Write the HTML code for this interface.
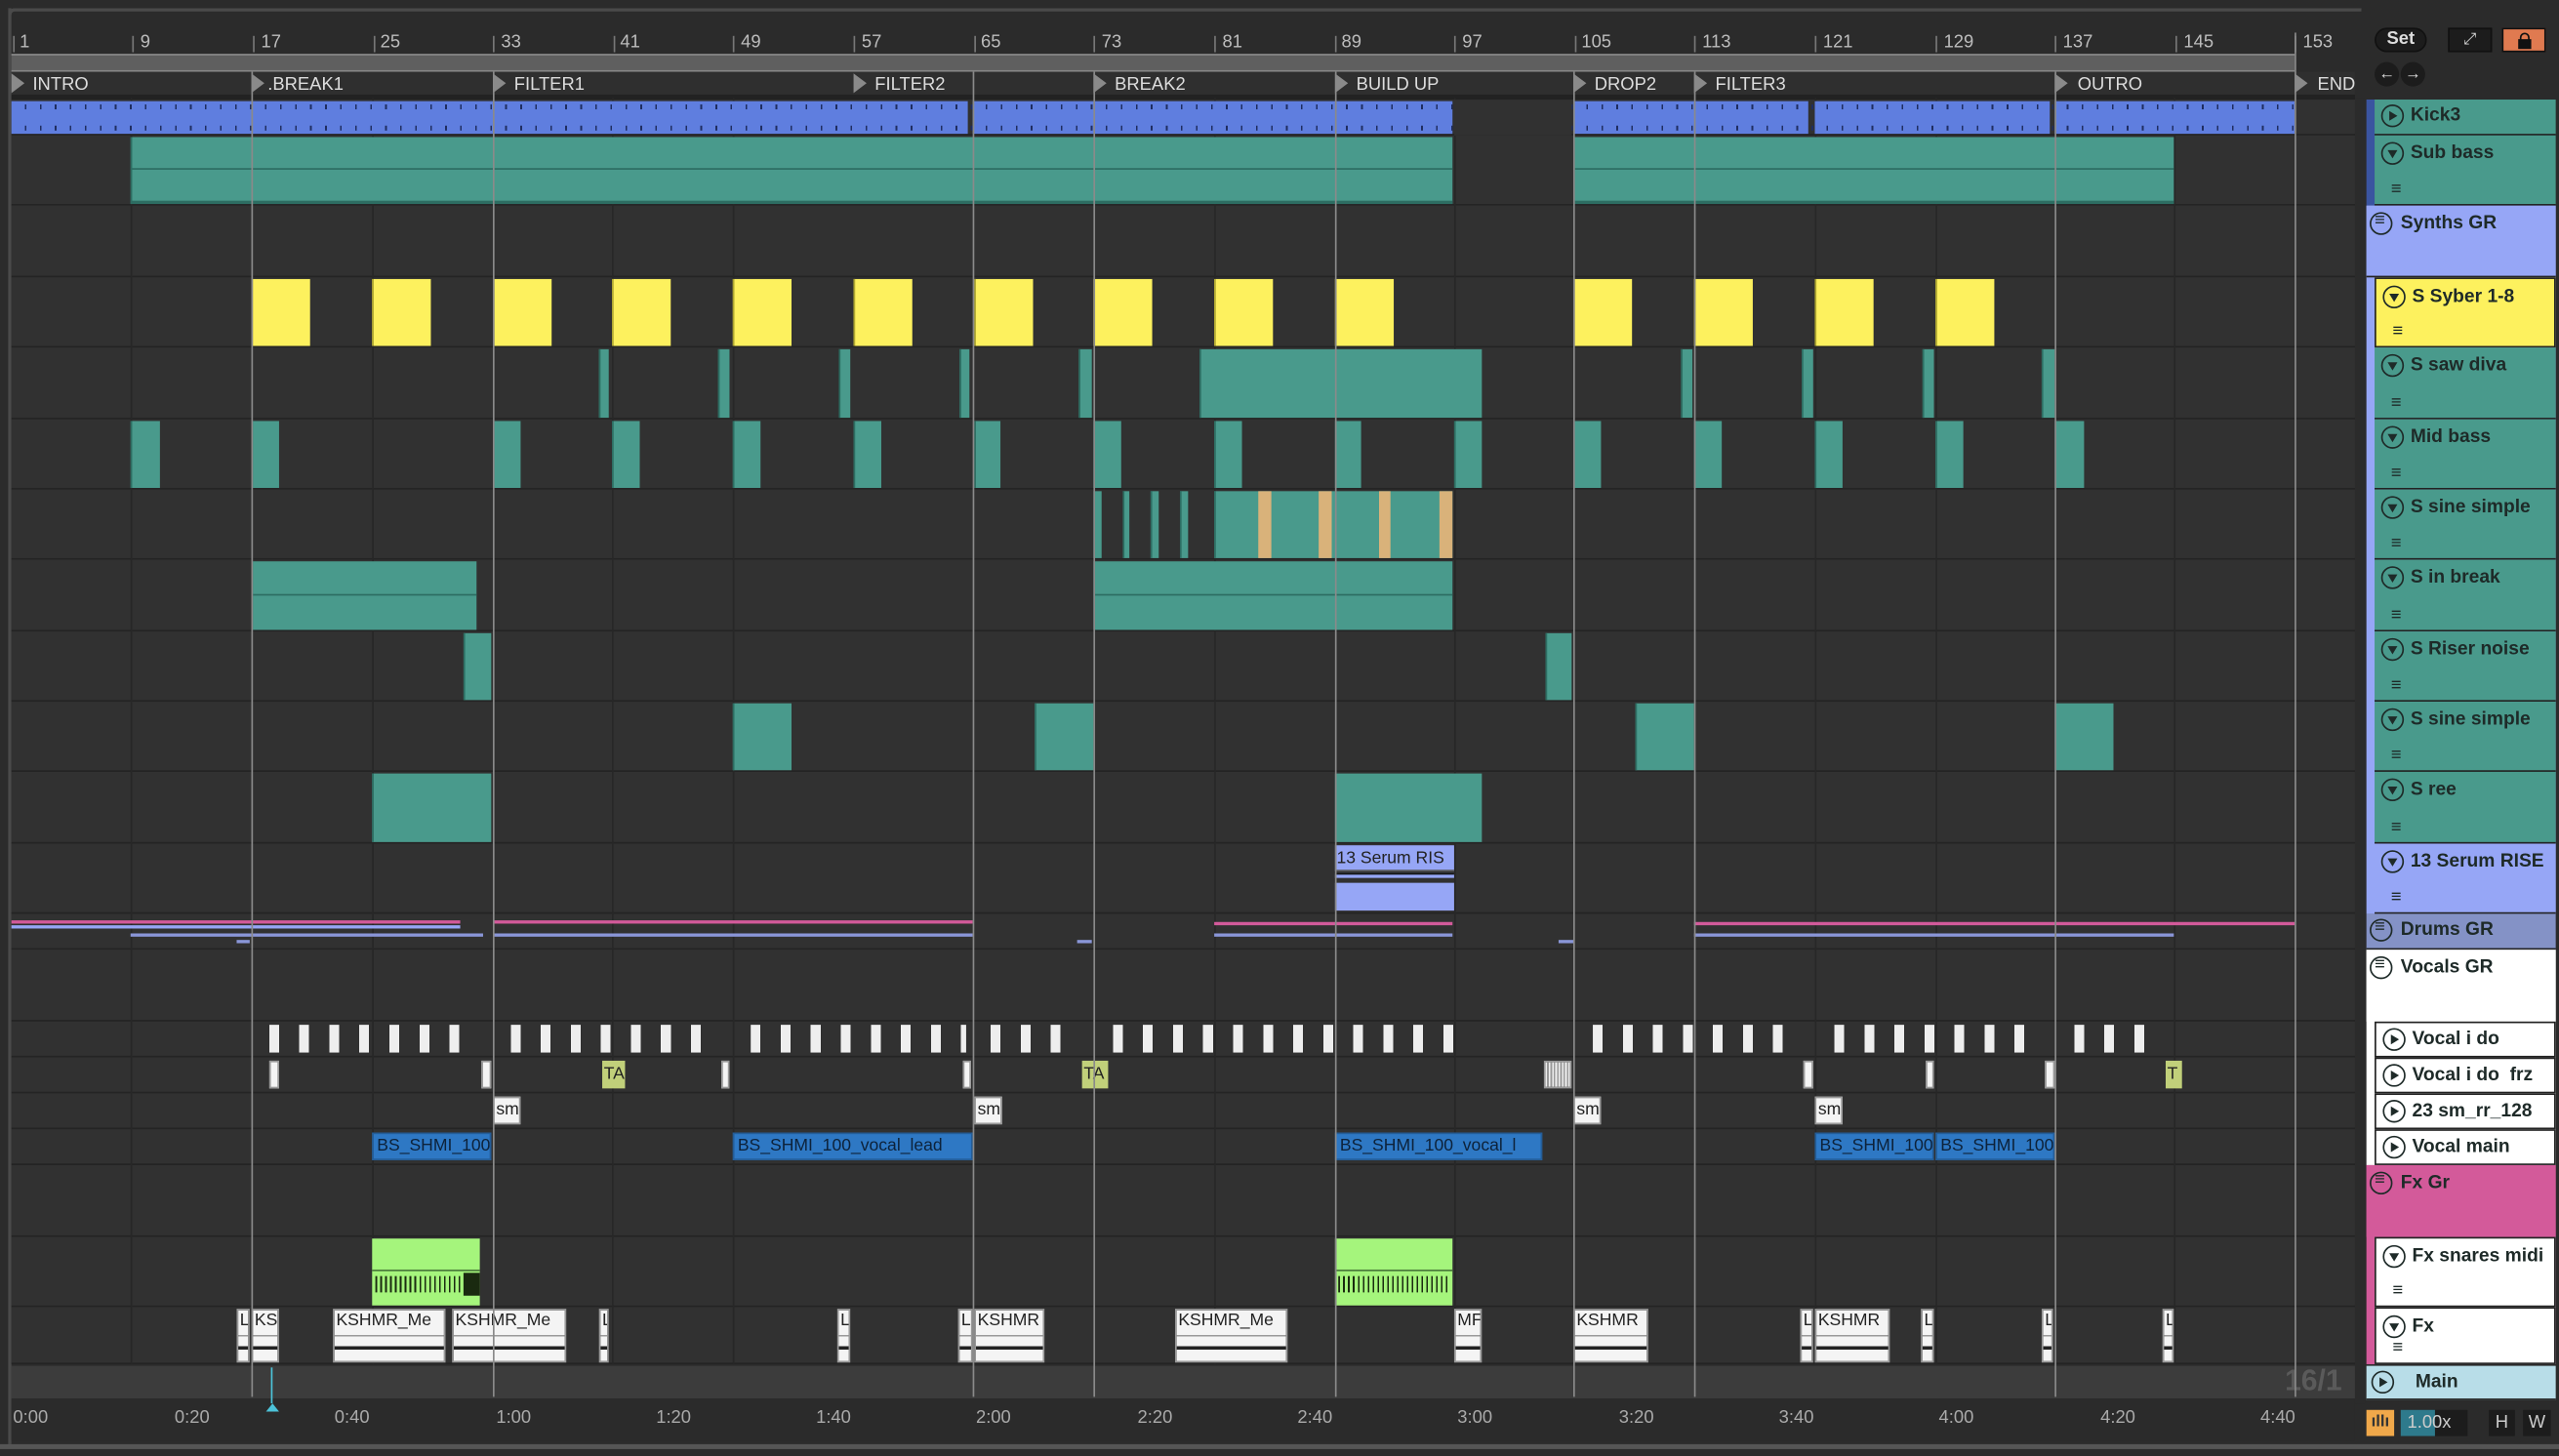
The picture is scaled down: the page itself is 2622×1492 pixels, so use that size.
<!DOCTYPE html>
<html><head><meta charset="utf-8"><style>
*{margin:0;padding:0;box-sizing:border-box}
html,body{width:2622px;height:1492px;overflow:hidden;background:#2a2a2a}
#w{position:absolute;left:0;top:0;width:1568px;height:892px;transform:scale(1.67219);transform-origin:0 0;font-family:"Liberation Sans",sans-serif;background:#2b2b2b}
.a{position:absolute}
.r{position:absolute;left:7px;width:1436px;background:#313131;border-bottom:1px solid #242424}
.c{position:absolute;top:1px;bottom:1px}
.t{background:#499a8c;border-left:1px solid #2d6d62}
.b{background:#5f7edf}
.y{background:#fdf15e;border-left:1px solid #b0a830}
.g{background:#a5f57c}
.w{background:#f4f4f4;border:1px solid #999}
.v{background:#2e78c4;color:#0d223a;font-size:10.5px;line-height:15px;padding-left:2px;overflow:hidden;white-space:nowrap;border:1px solid #245d98}
.lbl{font-size:10.5px;color:#222;overflow:hidden;white-space:nowrap;padding-left:1px;line-height:13px}
.fx{background:linear-gradient(#f4f4f4 0 15px,#999 15px 16px,#f4f4f4 16px 22px,#222 22px 24px,#f4f4f4 24px)}
.vl{position:absolute;top:44px;height:812px;width:1px;background:#8a8a8a}
.dl{position:absolute;top:60px;height:776px;width:1px;background:#272727}
.num{position:absolute;top:20px;font-size:11px;color:#bdbdbd}
.tick{position:absolute;top:22px;width:1px;height:10px;background:#777}
.loc{position:absolute;top:45px;font-size:11px;color:#ddd;line-height:14px}
.tri{position:absolute;top:45px;width:0;height:0;border-top:6px solid transparent;border-bottom:6px solid transparent;border-left:8px solid #8a8a8a}
.h{position:absolute;left:1455px;width:111px;border-bottom:1px solid #222;font-size:11.5px;font-weight:bold;color:#1e2a28;padding:4px 0 0 22px;line-height:14px}
.h .ic{position:absolute;left:4px;top:4px;width:14px;height:14px;border:1.3px solid #1e2a28;border-radius:50%}
.pl:after{content:"";position:absolute;left:4px;top:2.5px;border-top:3.5px solid transparent;border-bottom:3.5px solid transparent;border-left:5px solid #1e2a28}
.dn:after{content:"";position:absolute;left:2.5px;top:4px;border-left:3.5px solid transparent;border-right:3.5px solid transparent;border-top:5px solid #1e2a28}
.gr:after{content:"≡";position:absolute;left:2px;top:-3px;font-size:11px}
.h .m{position:absolute;left:10px;font-size:11px;bottom:2px}
.tm{position:absolute;top:863px;font-size:11px;color:#aaa}
</style></head><body><div id="w">
<div class="a" style="left:5px;top:5px;width:1442px;height:4px;border-top:2px solid #4a4a4a;border-left:2px solid #4a4a4a;border-radius:4px 0 0 0"></div>
<div class="a" style="left:5px;top:5px;width:2px;height:880px;background:#4a4a4a"></div>
<div class="num" style="left:12px">1</div><div class="num" style="left:86px">9</div><div class="num" style="left:160px">17</div><div class="num" style="left:233px">25</div><div class="num" style="left:307px">33</div><div class="num" style="left:380px">41</div><div class="num" style="left:454px">49</div><div class="num" style="left:528px">57</div><div class="num" style="left:601px">65</div><div class="num" style="left:675px">73</div><div class="num" style="left:749px">81</div><div class="num" style="left:822px">89</div><div class="num" style="left:896px">97</div><div class="num" style="left:969px">105</div><div class="num" style="left:1043px">113</div><div class="num" style="left:1117px">121</div><div class="num" style="left:1191px">129</div><div class="num" style="left:1264px">137</div><div class="num" style="left:1338px">145</div><div class="num" style="left:1411px">153</div>
<div class="tick" style="left:8px"></div><div class="tick" style="left:81px"></div><div class="tick" style="left:155px"></div><div class="tick" style="left:229px"></div><div class="tick" style="left:302px"></div><div class="tick" style="left:376px"></div><div class="tick" style="left:449px"></div><div class="tick" style="left:523px"></div><div class="tick" style="left:597px"></div><div class="tick" style="left:670px"></div><div class="tick" style="left:744px"></div><div class="tick" style="left:818px"></div><div class="tick" style="left:891px"></div><div class="tick" style="left:965px"></div><div class="tick" style="left:1038px"></div><div class="tick" style="left:1112px"></div><div class="tick" style="left:1186px"></div><div class="tick" style="left:1259px"></div><div class="tick" style="left:1333px"></div><div class="tick" style="left:1406px"></div>
<div class="a" style="left:7px;top:33px;width:1399px;height:11px;background:#5f5f5f;border-top:1px solid #888;border-bottom:1px solid #888"></div>
<div class="a" style="left:7px;top:44px;width:1436px;height:14px;background:#2f2f2f"></div>
<div class="a" style="left:7px;top:58px;width:1436px;height:3px;background:#222"></div>
<div class="tri" style="left:7px"></div><div class="loc" style="left:20px">INTRO</div>
<div class="tri" style="left:154px"></div><div class="loc" style="left:164px">.BREAK1</div>
<div class="tri" style="left:302px"></div><div class="loc" style="left:315px">FILTER1</div>
<div class="tri" style="left:523px"></div><div class="loc" style="left:536px">FILTER2</div>
<div class="tri" style="left:670px"></div><div class="loc" style="left:683px">BREAK2</div>
<div class="tri" style="left:818px"></div><div class="loc" style="left:831px">BUILD UP</div>
<div class="tri" style="left:964px"></div><div class="loc" style="left:977px">DROP2</div>
<div class="tri" style="left:1038px"></div><div class="loc" style="left:1051px">FILTER3</div>
<div class="tri" style="left:1259px"></div><div class="loc" style="left:1273px">OUTRO</div>
<div class="tri" style="left:1406px"></div><div class="loc" style="left:1420px">END</div>

<div class="r" style="top:61px;height:22px"></div>
<div class="r" style="top:83px;height:43px"></div>
<div class="r" style="top:126px;height:44px"></div>
<div class="r" style="top:170px;height:43px"></div>
<div class="r" style="top:213px;height:44px"></div>
<div class="r" style="top:257px;height:43px"></div>
<div class="r" style="top:300px;height:43px"></div>
<div class="r" style="top:343px;height:44px"></div>
<div class="r" style="top:387px;height:43px"></div>
<div class="r" style="top:430px;height:43px"></div>
<div class="r" style="top:473px;height:44px"></div>
<div class="r" style="top:517px;height:43px"></div>
<div class="r" style="top:560px;height:22px"></div>
<div class="r" style="top:582px;height:44px"></div>
<div class="r" style="top:626px;height:22px"></div>
<div class="r" style="top:648px;height:22px"></div>
<div class="r" style="top:670px;height:22px"></div>
<div class="r" style="top:692px;height:22px"></div>
<div class="r" style="top:714px;height:44px"></div>
<div class="r" style="top:758px;height:43px"></div>
<div class="r" style="top:801px;height:35px"></div>
<div class="a" style="left:7px;top:837px;width:1436px;height:20px;background:#3c3c3c"></div>
<div class="a" style="left:1400px;top:836px;font-size:18px;font-weight:bold;color:#5a5a5a">16/1</div>

<div class="dl" style="left:80px"></div><div class="dl" style="left:228px"></div><div class="dl" style="left:375px"></div><div class="dl" style="left:449px"></div><div class="dl" style="left:744px"></div><div class="dl" style="left:891px"></div><div class="dl" style="left:1112px"></div><div class="dl" style="left:1186px"></div><div class="dl" style="left:1332px"></div>

<div class="a" style="left:0;top:61px;width:1568px;height:22px">
<div class="c b" style="left:7px;width:586px"></div><div class="c b" style="left:596px;width:294px"></div><div class="c b" style="left:964px;width:144px"></div><div class="c b" style="left:1112px;width:144px"></div><div class="c b" style="left:1259px;width:147px"></div>
<div class="a" style="left:7px;top:3px;width:1399px;height:3px;background:repeating-linear-gradient(90deg,transparent 0 8.2px,#1f2d60 8.2px 9.2px)"></div>
<div class="a" style="left:7px;top:16px;width:1399px;height:3px;background:repeating-linear-gradient(90deg,transparent 0 8.2px,#1f2d60 8.2px 9.2px)"></div>
<div class="a" style="left:891px;top:0;width:72px;height:22px;background:#313131"></div>
</div>
<div class="a" style="left:0;top:83px;width:1568px;height:43px">
<div class="c t" style="left:80px;width:810px;border-bottom:2px solid #2d6d62"></div><div class="c t" style="left:964px;width:368px;border-bottom:2px solid #2d6d62"></div>
<div class="a" style="left:80px;top:20px;width:810px;height:1px;background:#2d6d62"></div><div class="a" style="left:964px;top:20px;width:368px;height:1px;background:#2d6d62"></div>
</div>
<div class="a" style="left:0;top:170px;width:1568px;height:43px">
<div class="c y" style="left:154px;width:36px"></div><div class="c y" style="left:228px;width:36px"></div><div class="c y" style="left:302px;width:36px"></div><div class="c y" style="left:375px;width:36px"></div><div class="c y" style="left:449px;width:36px"></div><div class="c y" style="left:523px;width:36px"></div><div class="c y" style="left:597px;width:36px"></div><div class="c y" style="left:670px;width:36px"></div><div class="c y" style="left:744px;width:36px"></div><div class="c y" style="left:818px;width:36px"></div><div class="c y" style="left:964px;width:36px"></div><div class="c y" style="left:1038px;width:36px"></div><div class="c y" style="left:1112px;width:36px"></div><div class="c y" style="left:1186px;width:36px"></div>
</div>
<div class="a" style="left:0;top:213px;width:1568px;height:44px">
<div class="c t" style="left:367px;width:6px"></div><div class="c t" style="left:440px;width:7px"></div><div class="c t" style="left:514px;width:7px"></div><div class="c t" style="left:588px;width:6px"></div><div class="c t" style="left:661px;width:8px"></div><div class="c t" style="left:735px;width:173px"></div><div class="c t" style="left:1030px;width:7px"></div><div class="c t" style="left:1104px;width:7px"></div><div class="c t" style="left:1178px;width:7px"></div><div class="c t" style="left:1251px;width:8px"></div>
</div>
<div class="a" style="left:0;top:257px;width:1568px;height:43px">
<div class="c t" style="left:80px;width:18px"></div><div class="c t" style="left:154px;width:17px"></div><div class="c t" style="left:302px;width:17px"></div><div class="c t" style="left:375px;width:17px"></div><div class="c t" style="left:449px;width:17px"></div><div class="c t" style="left:523px;width:17px"></div><div class="c t" style="left:597px;width:16px"></div><div class="c t" style="left:670px;width:17px"></div><div class="c t" style="left:744px;width:17px"></div><div class="c t" style="left:818px;width:16px"></div><div class="c t" style="left:891px;width:17px"></div><div class="c t" style="left:964px;width:17px"></div><div class="c t" style="left:1038px;width:17px"></div><div class="c t" style="left:1112px;width:17px"></div><div class="c t" style="left:1186px;width:17px"></div><div class="c t" style="left:1259px;width:18px"></div>
</div>
<div class="a" style="left:0;top:300px;width:1568px;height:43px">
<div class="c t" style="left:670px;width:5px"></div><div class="c t" style="left:688px;width:4px"></div><div class="c t" style="left:705px;width:5px"></div><div class="c t" style="left:723px;width:5px"></div><div class="c t" style="left:744px;width:146px"></div>
<div class="c" style="left:771px;width:8px;background:#d9b27a"></div><div class="c" style="left:808px;width:8px;background:#d9b27a"></div><div class="c" style="left:845px;width:7px;background:#d9b27a"></div><div class="c" style="left:882px;width:8px;background:#d9b27a"></div>
</div>
<div class="a" style="left:0;top:343px;width:1568px;height:44px">
<div class="c t" style="left:154px;width:138px"></div><div class="c t" style="left:670px;width:220px"></div>
<div class="a" style="left:154px;top:21px;width:138px;height:1px;background:#2d6d62"></div><div class="a" style="left:670px;top:21px;width:220px;height:1px;background:#2d6d62"></div>
</div>
<div class="a" style="left:0;top:387px;width:1568px;height:43px">
<div class="c t" style="left:284px;width:17px"></div><div class="c t" style="left:947px;width:16px"></div>
</div>
<div class="a" style="left:0;top:430px;width:1568px;height:43px">
<div class="c t" style="left:449px;width:36px"></div><div class="c t" style="left:634px;width:36px"></div><div class="c t" style="left:1002px;width:36px"></div><div class="c t" style="left:1259px;width:36px"></div>
</div>
<div class="a" style="left:0;top:473px;width:1568px;height:44px">
<div class="c t" style="left:228px;width:73px"></div><div class="c t" style="left:818px;width:90px"></div>
</div>
<div class="a" style="left:0;top:517px;width:1568px;height:43px">
<div class="a lbl" style="left:818px;top:1px;width:73px;height:16px;background:#96a6f6;border-bottom:1px solid #555;line-height:16px">13 Serum RIS</div>
<div class="a" style="left:818px;top:18px;width:73px;height:3px;background:#96a6f6;border-top:1px solid #111"></div>
<div class="a" style="left:818px;top:24px;width:73px;height:17px;background:#96a6f6"></div>
</div>
<div class="a" style="left:0;top:560px;width:1568px;height:22px">
<div class="a" style="left:7px;top:4px;width:275px;height:2px;background:#d35a9a"></div><div class="a" style="left:7px;top:7px;width:275px;height:2px;background:#96a6f6"></div>
<div class="a" style="left:302px;top:4px;width:294px;height:2px;background:#d35a9a"></div>
<div class="a" style="left:744px;top:5px;width:146px;height:2px;background:#d35a9a"></div>
<div class="a" style="left:1038px;top:5px;width:368px;height:2px;background:#d35a9a"></div>
<div class="a" style="left:80px;top:12px;width:216px;height:2px;background:#8a96d8"></div><div class="a" style="left:302px;top:12px;width:294px;height:2px;background:#8a96d8"></div><div class="a" style="left:744px;top:12px;width:146px;height:2px;background:#8a96d8"></div><div class="a" style="left:1038px;top:12px;width:294px;height:2px;background:#8a96d8"></div>
<div class="a" style="left:145px;top:16px;width:8px;height:2px;background:#8a96d8"></div><div class="a" style="left:660px;top:16px;width:9px;height:2px;background:#8a96d8"></div><div class="a" style="left:955px;top:16px;width:9px;height:2px;background:#8a96d8"></div>
</div>
<div class="a" style="left:0;top:626px;width:1568px;height:22px">
<div class="c" style="left:165px;width:118px;top:2px;bottom:3px;background:repeating-linear-gradient(90deg,#eee 0 6px,transparent 6px 18.4px)"></div>
<div class="c" style="left:313px;width:120px;top:2px;bottom:3px;background:repeating-linear-gradient(90deg,#eee 0 6px,transparent 6px 18.4px)"></div>
<div class="c" style="left:460px;width:132px;top:2px;bottom:3px;background:repeating-linear-gradient(90deg,#eee 0 6px,transparent 6px 18.4px)"></div>
<div class="c" style="left:607px;width:46px;top:2px;bottom:3px;background:repeating-linear-gradient(90deg,#eee 0 6px,transparent 6px 18.4px)"></div>
<div class="c" style="left:682px;width:210px;top:2px;bottom:3px;background:repeating-linear-gradient(90deg,#eee 0 6px,transparent 6px 18.4px)"></div>
<div class="c" style="left:976px;width:120px;top:2px;bottom:3px;background:repeating-linear-gradient(90deg,#eee 0 6px,transparent 6px 18.4px)"></div>
<div class="c" style="left:1124px;width:120px;top:2px;bottom:3px;background:repeating-linear-gradient(90deg,#eee 0 6px,transparent 6px 18.4px)"></div>
<div class="c" style="left:1271px;width:48px;top:2px;bottom:3px;background:repeating-linear-gradient(90deg,#eee 0 6px,transparent 6px 18.4px)"></div>
</div>
<div class="a" style="left:0;top:648px;width:1568px;height:22px">
<div class="c w" style="left:165px;width:6px;top:2px;bottom:3px"></div><div class="c w" style="left:295px;width:6px;top:2px;bottom:3px"></div>
<div class="c lbl" style="left:369px;width:14px;top:2px;bottom:3px;background:#c1d07a;line-height:17px">TA</div>
<div class="c w" style="left:442px;width:5px;top:2px;bottom:3px"></div><div class="c w" style="left:590px;width:5px;top:2px;bottom:3px"></div>
<div class="c lbl" style="left:663px;width:16px;top:2px;bottom:3px;background:#c1d07a;line-height:17px">TA</div>
<div class="c w" style="left:946px;width:17px;top:2px;bottom:3px;background:repeating-linear-gradient(90deg,#eee 0 1px,#999 1px 2px)"></div>
<div class="c w" style="left:1105px;width:6px;top:2px;bottom:3px"></div><div class="c w" style="left:1180px;width:5px;top:2px;bottom:3px"></div><div class="c w" style="left:1253px;width:6px;top:2px;bottom:3px"></div>
<div class="c lbl" style="left:1327px;width:10px;top:2px;bottom:3px;background:#c1d07a;line-height:17px">T</div>
</div>
<div class="a" style="left:0;top:670px;width:1568px;height:22px">
<div class="c w lbl" style="left:302px;width:17px;top:2px;bottom:3px;line-height:15px">sm</div><div class="c w lbl" style="left:597px;width:17px;top:2px;bottom:3px;line-height:15px">sm</div><div class="c w lbl" style="left:964px;width:17px;top:2px;bottom:3px;line-height:15px">sm</div><div class="c w lbl" style="left:1112px;width:17px;top:2px;bottom:3px;line-height:15px">sm</div>
</div>
<div class="a" style="left:0;top:692px;width:1568px;height:22px">
<div class="c v" style="left:228px;width:73px;top:2px;bottom:3px">BS_SHMI_100</div>
<div class="c v" style="left:449px;width:147px;top:2px;bottom:3px">BS_SHMI_100_vocal_lead</div>
<div class="c v" style="left:818px;width:127px;top:2px;bottom:3px">BS_SHMI_100_vocal_l</div>
<div class="c v" style="left:1112px;width:73px;top:2px;bottom:3px">BS_SHMI_100</div>
<div class="c v" style="left:1186px;width:73px;top:2px;bottom:3px">BS_SHMI_100</div>
</div>
<div class="a" style="left:0;top:758px;width:1568px;height:43px">
<div class="c g" style="left:228px;width:66px"></div><div class="c g" style="left:818px;width:72px"></div>
<div class="a" style="left:230px;top:24px;width:54px;height:10px;background:repeating-linear-gradient(90deg,#1a2a10 0 1px,transparent 1px 3px)"></div>
<div class="a" style="left:284px;top:22px;width:10px;height:14px;background:#1a2a10"></div>
<div class="a" style="left:228px;top:20px;width:66px;height:1px;background:#4a7a3a"></div>
<div class="a" style="left:820px;top:24px;width:68px;height:10px;background:repeating-linear-gradient(90deg,#1a2a10 0 1px,transparent 1px 3px)"></div>
<div class="a" style="left:818px;top:20px;width:72px;height:1px;background:#4a7a3a"></div>
</div>
<div class="a" style="left:0;top:801px;width:1568px;height:35px">
<div class="c w lbl fx" style="left:145px;width:8px">L</div><div class="c w lbl fx" style="left:154px;width:17px">KS</div>
<div class="c w lbl fx" style="left:204px;width:69px">KSHMR_Me</div><div class="c w lbl fx" style="left:277px;width:70px">KSHMR_Me</div>
<div class="c w lbl fx" style="left:367px;width:6px">L</div><div class="c w lbl fx" style="left:513px;width:8px">L</div><div class="c w lbl fx" style="left:587px;width:9px">L</div>
<div class="c w lbl fx" style="left:597px;width:43px">KSHMR</div><div class="c w lbl fx" style="left:720px;width:69px">KSHMR_Me</div>
<div class="c w lbl fx" style="left:891px;width:17px">MF</div><div class="c w lbl fx" style="left:964px;width:46px">KSHMR</div>
<div class="c w lbl fx" style="left:1103px;width:8px">L</div><div class="c w lbl fx" style="left:1112px;width:46px">KSHMR</div>
<div class="c w lbl fx" style="left:1177px;width:8px">L</div><div class="c w lbl fx" style="left:1251px;width:7px">L</div><div class="c w lbl fx" style="left:1325px;width:7px">L</div>
</div>

<div class="vl" style="left:154px"></div><div class="vl" style="left:302px"></div><div class="vl" style="left:596px"></div><div class="vl" style="left:670px"></div><div class="vl" style="left:818px"></div><div class="vl" style="left:964px"></div><div class="vl" style="left:1038px"></div><div class="vl" style="left:1259px"></div><div class="vl" style="left:1406px;top:20px;height:836px"></div>

<div class="a" style="left:7px;top:857px;width:1436px;height:26px;background:#2b2b2b"></div>
<div class="tm" style="left:8px">0:00</div><div class="tm" style="left:107px">0:20</div><div class="tm" style="left:205px">0:40</div><div class="tm" style="left:304px">1:00</div><div class="tm" style="left:402px">1:20</div><div class="tm" style="left:500px">1:40</div><div class="tm" style="left:598px">2:00</div><div class="tm" style="left:697px">2:20</div><div class="tm" style="left:795px">2:40</div><div class="tm" style="left:893px">3:00</div><div class="tm" style="left:992px">3:20</div><div class="tm" style="left:1090px">3:40</div><div class="tm" style="left:1188px">4:00</div><div class="tm" style="left:1287px">4:20</div><div class="tm" style="left:1385px">4:40</div>
<div class="a" style="left:166px;top:838px;width:1px;height:22px;background:#4cc3d9"></div>
<div class="a" style="left:163px;top:860px;border-left:4px solid transparent;border-right:4px solid transparent;border-bottom:5px solid #4cc3d9"></div>
<div class="a" style="left:0;top:885px;width:1568px;height:3px;background:#555"></div>

<div class="a" style="left:1443px;top:60px;width:6px;height:800px;background:#2b2b2b"></div>
<div class="a" style="left:1450px;top:61px;width:5px;height:65px;background:#3a54a0"></div>
<div class="a" style="left:1450px;top:126px;width:116px;height:434px;background:#96a6f6"></div>
<div class="a" style="left:1450px;top:582px;width:116px;height:132px;background:#fff"></div>
<div class="a" style="left:1450px;top:714px;width:116px;height:122px;background:#d35a9a"></div>

<div class="h" style="top:61px;height:22px;background:#499a8c;padding-top:3px"><span class="ic pl" style="top:3px"></span>Kick3</div>
<div class="h" style="top:83px;height:43px;background:#499a8c"><span class="ic dn"></span>Sub bass<span class="m">≡</span></div>
<div class="h" style="left:1450px;width:116px;top:126px;height:44px;background:#96a6f6;padding-left:21px"><span class="ic gr" style="left:2px"></span>Synths GR</div>
<div class="h" style="top:170px;height:43px;background:#fdf15e;border:1px solid #222"><span class="ic dn"></span>S Syber 1-8<span class="m">≡</span></div>
<div class="h" style="top:213px;height:44px;background:#499a8c"><span class="ic dn"></span>S saw diva<span class="m">≡</span></div>
<div class="h" style="top:257px;height:43px;background:#499a8c"><span class="ic dn"></span>Mid bass<span class="m">≡</span></div>
<div class="h" style="top:300px;height:43px;background:#499a8c"><span class="ic dn"></span>S sine simple<span class="m">≡</span></div>
<div class="h" style="top:343px;height:44px;background:#499a8c"><span class="ic dn"></span>S in break<span class="m">≡</span></div>
<div class="h" style="top:387px;height:43px;background:#499a8c"><span class="ic dn"></span>S Riser noise<span class="m">≡</span></div>
<div class="h" style="top:430px;height:43px;background:#499a8c"><span class="ic dn"></span>S sine simple<span class="m">≡</span></div>
<div class="h" style="top:473px;height:44px;background:#499a8c"><span class="ic dn"></span>S ree<span class="m">≡</span></div>
<div class="h" style="top:517px;height:43px;background:#96a6f6"><span class="ic dn"></span>13 Serum RISE<span class="m">≡</span></div>
<div class="h" style="left:1450px;width:116px;top:560px;height:22px;background:#8492c6;padding-left:21px;padding-top:3px"><span class="ic gr" style="left:2px;top:3px"></span>Drums GR</div>
<div class="h" style="left:1450px;width:116px;top:582px;height:44px;background:#fff;padding-left:21px;border-bottom:none"><span class="ic gr" style="left:2px"></span>Vocals GR</div>
<div class="h" style="top:626px;height:22px;background:#fff;border:1px solid #222;padding-top:3px"><span class="ic pl" style="top:3px"></span>Vocal i do</div>
<div class="h" style="top:648px;height:22px;background:#fff;border:1px solid #222;padding-top:3px"><span class="ic pl" style="top:3px"></span>Vocal i do&nbsp; frz</div>
<div class="h" style="top:670px;height:22px;background:#fff;border:1px solid #222;padding-top:3px"><span class="ic pl" style="top:3px"></span>23 sm_rr_128</div>
<div class="h" style="top:692px;height:22px;background:#fff;border:1px solid #222;padding-top:3px"><span class="ic pl" style="top:3px"></span>Vocal main</div>
<div class="h" style="left:1450px;width:116px;top:714px;height:44px;background:#d35a9a;padding-left:21px;border-bottom:none"><span class="ic gr" style="left:2px"></span>Fx Gr</div>
<div class="h" style="top:758px;height:43px;background:#fff;border:1px solid #222"><span class="ic dn"></span>Fx snares midi<span class="m">≡</span></div>
<div class="h" style="top:801px;height:35px;background:#fff;border:1px solid #222"><span class="ic dn"></span>Fx<span class="m">≡</span></div>
<div class="h" style="left:1450px;width:116px;top:837px;height:21px;background:#b8dde8;padding-left:30px;padding-top:3px"><span class="ic pl" style="left:3px;top:3px"></span>Main</div>

<div class="a" style="left:1455px;top:17px;width:32px;height:15px;border-radius:8px;background:#1c1c1c;border:1px solid #111;color:#ddd;font-size:11px;font-weight:bold;text-align:center;line-height:13px">Set</div>
<div class="a" style="left:1455px;top:38px;width:15px;height:15px;border-radius:50%;background:#1c1c1c;color:#ddd;font-size:10px;text-align:center;line-height:15px">←</div>
<div class="a" style="left:1471px;top:38px;width:15px;height:15px;border-radius:50%;background:#1c1c1c;color:#ddd;font-size:10px;text-align:center;line-height:15px">→</div>
<div class="a" style="left:1500px;top:17px;width:27px;height:15px;background:#1c1c1c;border:1px solid #111;color:#ddd;font-size:10px;text-align:center;line-height:13px">⤢</div>
<div class="a" style="left:1533px;top:17px;width:27px;height:15px;background:#e07a50;border:1px solid #111"><div class="a" style="left:9px;top:6px;width:8px;height:6px;background:#111"></div><div class="a" style="left:10px;top:2px;width:6px;height:6px;border:1.5px solid #111;border-radius:3px 3px 0 0"></div></div>

<div class="a" style="left:1450px;top:864px;width:17px;height:16px;background:#f0a84a;color:#333;font-size:10px;text-align:center;line-height:16px;font-weight:bold">ıllı</div>
<div class="a" style="left:1471px;top:864px;width:41px;height:16px;background:#1c1c1c;color:#ccc;font-size:11px;line-height:16px"><div class="a" style="left:0;top:0;width:21px;height:16px;background:#2e7a8c"></div><span class="a" style="left:4px">1.00x</span></div>
<div class="a" style="left:1525px;top:864px;width:16px;height:16px;background:#1c1c1c;color:#ccc;font-size:11px;text-align:center;line-height:16px">H</div>
<div class="a" style="left:1546px;top:864px;width:17px;height:16px;background:#1c1c1c;color:#ccc;font-size:11px;text-align:center;line-height:16px">W</div>
</div></body></html>
